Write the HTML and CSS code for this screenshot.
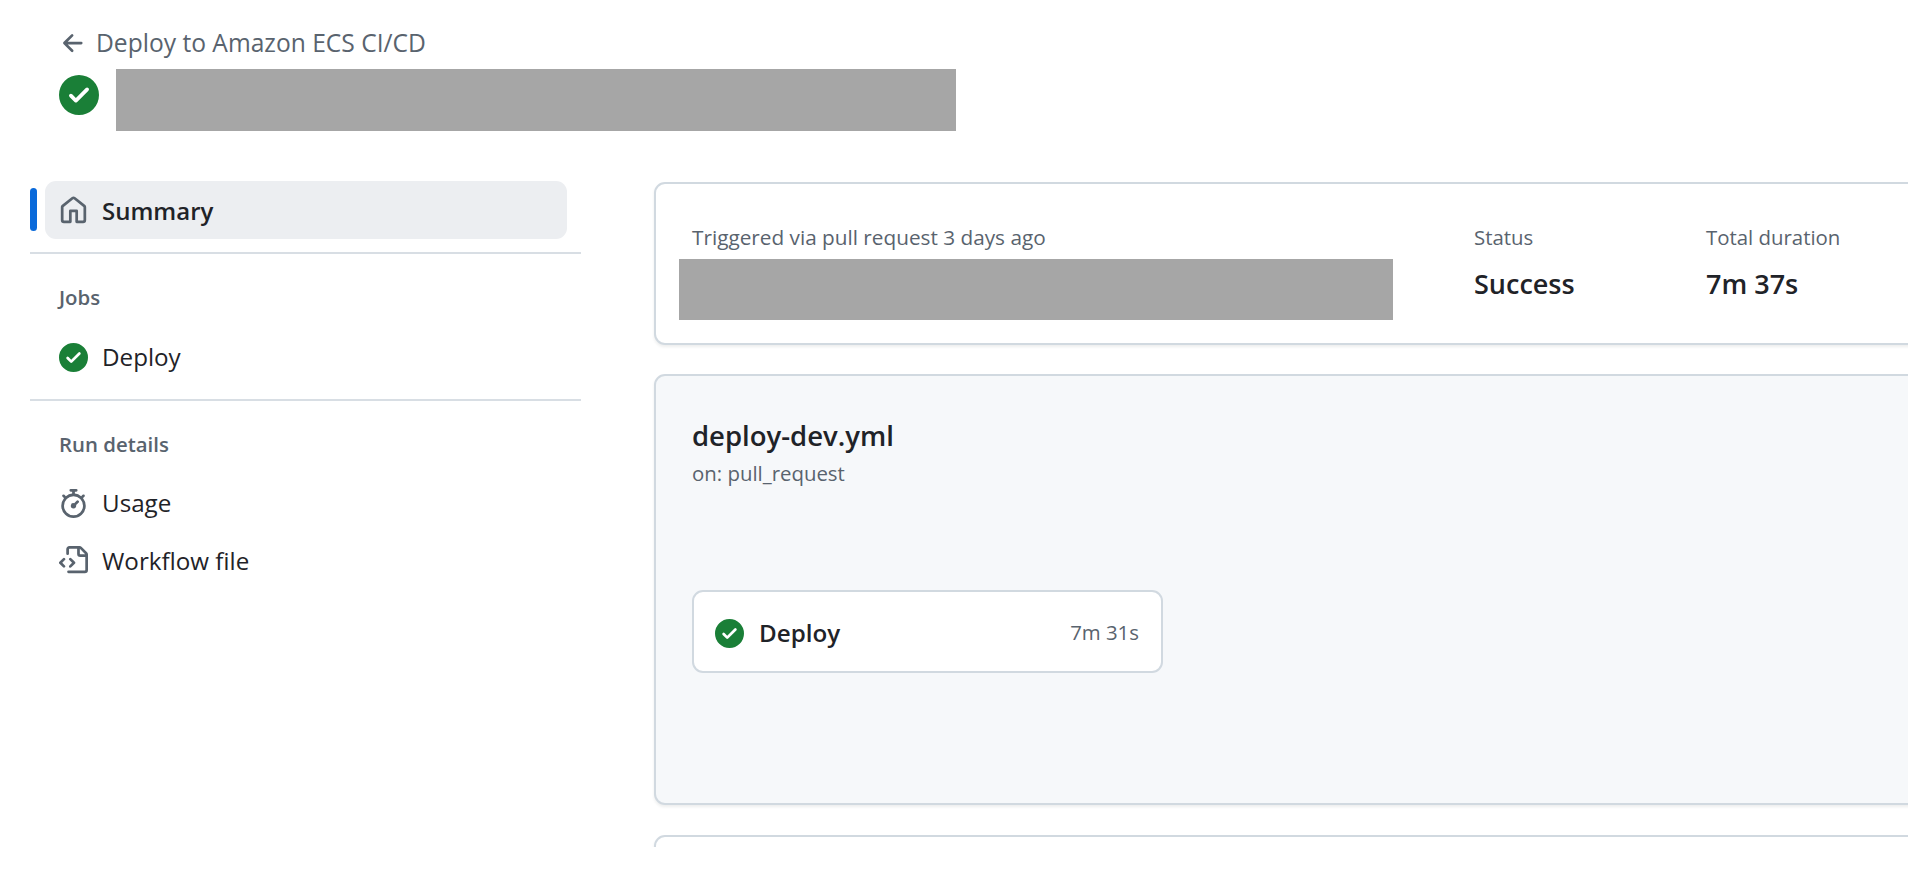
FILE: index.html
```html
<!DOCTYPE html>
<html lang="en">
<head>
<meta charset="utf-8">
<title>Deploy to Amazon ECS CI/CD</title>
<link rel="stylesheet" href="styles.css">
</head>
<body>
<svg class="defs" width="0" height="0" aria-hidden="true">
  <symbol id="i-check" viewBox="0 0 16 16"><path d="M8 16A8 8 0 1 1 8 0a8 8 0 0 1 0 16Zm3.78-9.72a.751.751 0 0 0-.018-1.042.751.751 0 0 0-1.042-.018L6.75 9.19 5.28 7.72a.751.751 0 0 0-1.042.018.751.751 0 0 0-.018 1.042l2 2a.75.75 0 0 0 1.06 0Z"/></symbol>
</svg>
<div class="page">
  <header class="head">
    <a class="back">
      <svg class="ic-back" viewBox="0 0 16 16"><path d="M7.78 12.53a.75.75 0 0 1-1.06 0L2.47 8.28a.75.75 0 0 1 0-1.06l4.25-4.25a.751.751 0 0 1 1.042.018.751.751 0 0 1 .018 1.042L4.81 7h7.44a.75.75 0 0 1 0 1.5H4.81l2.97 2.97a.75.75 0 0 1 0 1.06Z"/></svg>
      <span>Deploy to Amazon ECS CI/CD</span>
    </a>
    <div class="title-row">
      <svg class="ic-title"><use href="#i-check"/></svg>
      <div class="redact redact-title"></div>
    </div>
  </header>
  <div class="layout">
    <nav class="side">
      <a class="row row-active">
        <svg class="ic" viewBox="0 0 16 16"><path d="M6.906.664a1.749 1.749 0 0 1 2.187 0l5.25 4.2c.415.332.657.835.657 1.367v7.019A1.75 1.75 0 0 1 13.25 15h-3.5a.75.75 0 0 1-.75-.75V9H7v5.25a.75.75 0 0 1-.75.75h-3.5A1.75 1.75 0 0 1 1 13.25V6.23c0-.531.242-1.034.657-1.366l5.25-4.2Zm1.25 1.171a.25.25 0 0 0-.312 0l-5.25 4.2a.25.25 0 0 0-.094.196v7.019c0 .138.112.25.25.25H5.5V8.25a.75.75 0 0 1 .75-.75h3.5a.75.75 0 0 1 .75.75v5.25h2.75a.25.25 0 0 0 .25-.25V6.23a.25.25 0 0 0-.094-.195Z"/></svg>
        <span>Summary</span>
      </a>
      <div class="rule"></div>
      <h2 class="side-h">Jobs</h2>
      <a class="row">
        <svg class="ic ic-ok"><use href="#i-check"/></svg>
        <span>Deploy</span>
      </a>
      <div class="rule"></div>
      <h2 class="side-h side-h-b">Run details</h2>
      <a class="row">
        <svg class="ic" viewBox="0 0 16 16"><path d="M5.75.75A.75.75 0 0 1 6.5 0h3a.75.75 0 0 1 0 1.5h-.75v1l-.001.041a6.724 6.724 0 0 1 3.464 1.435l.007-.006.75-.75a.749.749 0 0 1 1.275.326.749.749 0 0 1-.215.734l-.75.75-.006.007a6.75 6.75 0 1 1-10.548 0L2.72 5.03l-.75-.75a.751.751 0 0 1 .018-1.042.751.751 0 0 1 1.042-.018l.75.75.007.006A6.72 6.72 0 0 1 7.25 2.541V1.5H6.5a.75.75 0 0 1-.75-.75ZM8 14.5a5.25 5.25 0 1 0-.001-10.501A5.25 5.25 0 0 0 8 14.5Zm.389-6.7 1.33-1.33a.75.75 0 1 1 1.061 1.06L9.45 8.861A1.503 1.503 0 0 1 8 10.75a1.499 1.499 0 1 1 .389-2.95Z"/></svg>
        <span>Usage</span>
      </a>
      <a class="row row-tight">
        <svg class="ic" viewBox="0 0 16 16"><path d="M4 1.75C4 .784 4.784 0 5.75 0h5.586c.464 0 .909.184 1.237.513l2.914 2.914c.329.328.513.773.513 1.237v8.586A1.75 1.75 0 0 1 14.25 15h-9a.75.75 0 0 1 0-1.5h9a.25.25 0 0 0 .25-.25V6h-2.75A1.75 1.75 0 0 1 10 4.25V1.5H5.75a.25.25 0 0 0-.25.25v2.5a.75.75 0 0 1-1.5 0Zm1.72 4.97a.75.75 0 0 1 1.06 0l2 2a.75.75 0 0 1 0 1.06l-2 2a.749.749 0 0 1-1.275-.326.749.749 0 0 1 .215-.734l1.47-1.47-1.47-1.47a.75.75 0 0 1 0-1.06ZM3.28 7.78 1.81 9.25l1.47 1.47a.751.751 0 0 1-.018 1.042.751.751 0 0 1-1.042.018l-2-2a.75.75 0 0 1 0-1.06l2-2a.751.751 0 0 1 1.042.018.751.751 0 0 1 .018 1.042Zm8.22-6.218V4.25c0 .138.112.25.25.25h2.688l-.011-.013-2.914-2.914-.013-.011Z"/></svg>
        <span>Workflow file</span>
      </a>
    </nav>
    <main class="main">
      <section class="card card-summary">
        <div class="trigger">
          <div class="label label-wide">Triggered via pull request 3 days ago</div>
          <div class="redact redact-actor"></div>
        </div>
        <div class="stat stat-status">
          <div class="label">Status</div>
          <div class="value">Success</div>
        </div>
        <div class="stat">
          <div class="label">Total duration</div>
          <div class="value">7m 37s</div>
        </div>
      </section>
      <section class="card card-graph">
        <h1 class="wf-name">deploy-dev.yml</h1>
        <div class="wf-on">on: pull_request</div>
        <a class="job">
          <svg class="ic ic-ok ic-job"><use href="#i-check"/></svg>
          <span class="job-name">Deploy</span>
          <span class="job-time">7m 31s</span>
        </a>
      </section>
      <section class="card card-next"></section>
    </main>
  </div>
</div>
</body>
</html>
```
FILE: styles.css
```css
* { box-sizing: border-box; }
html, body { margin: 0; padding: 0; background: #fff; overflow: hidden; }
body { font-family: "Open Sans", "Noto Sans", sans-serif; color: #1f2328; }
.defs { position: absolute; }
.page { height: 847px; overflow: hidden; width: 1908px; }

.head { padding: 26px 0 0 59px; }
.back { display: flex; align-items: center; height: 34px; gap: 8px; color: #59636e; font-size: 24.6px; line-height: 34px; }
.ic-back { width: 29px; height: 29px; fill: #59636e; flex: none; }
.title-row { display: flex; align-items: flex-start; gap: 17px; margin-top: 9px; }
.ic-title { width: 40px; height: 40px; margin-top: 6px; fill: #1a7f37; flex: none; }
.redact { background: #a6a6a6; }
.redact-title { width: 840px; height: 62px; }

.layout { display: flex; margin-top: 50px; padding-left: 30px; gap: 73px; }
.side { width: 551px; flex: none; }
.row { display: flex; align-items: center; height: 58px; padding-left: 29px; gap: 14px; font-size: 24.2px; color: #1f2328; }
.row span { padding-bottom: 2px; }
.row-tight { height: 57px; }
.row-tight span { padding-bottom: 0; }
.row-active { position: relative; margin-left: 14.5px; width: 522px; padding-left: 14.5px; background: #eceef1; border-radius: 11px; font-size: 24px; font-weight: 600; }
.row-active span { padding: 1px 0 0; }
.row-active::before { content: ""; position: absolute; left: -14.5px; top: 7px; width: 7px; height: 43px; border-radius: 4px; background: #0969da; }
.ic { width: 29px; height: 29px; fill: #59636e; flex: none; }
.ic-ok { fill: #1a7f37; }
.ic-job { margin-top: 3px; }
.rule { height: 2px; background: #d8dee4; margin-top: 13px; }
.side-h { margin: 0; padding: 28px 0 16px 29px; font-size: 20.4px; line-height: 30px; font-weight: 600; color: #59636e; }
.side-h-b { padding-bottom: 15px; }

.main { flex: none; width: 1400px; display: flex; flex-direction: column; margin-top: 1px; }
.card { border: 2px solid #d1d9e0; border-radius: 11px; box-shadow: 0 2px 3px rgba(31, 35, 40, .08); }
.card-summary { display: flex; height: 163px; padding: 38px 0 0 36px; background: #fff; }
.trigger { width: 782px; flex: none; }
.label { font-size: 20.4px; line-height: 30px; color: #59636e; }
.label-wide { font-size: 20.75px; }
.redact-actor { width: 714px; height: 61px; margin: 7px 0 0 -13px; }
.stat-status { width: 232px; flex: none; }
.value { font-size: 27px; line-height: 40px; margin-top: 12px; font-weight: 600; color: #1f2328; }
.card-graph { height: 431px; margin-top: 29px; padding: 40px 0 0 36px; background: #f6f8fa; }
.wf-name { margin: 0; font-size: 27.5px; line-height: 40px; font-weight: 600; color: #1f2328; }
.wf-on { margin-top: 2px; font-size: 20.4px; line-height: 30px; color: #59636e; }
.job { display: flex; align-items: center; width: 471px; height: 83px; margin-top: 102px; padding: 0 22px 0 21px; gap: 15px; background: #fff; border: 2px solid #d1d9e0; border-radius: 11px; }
.job-name { font-size: 24.2px; font-weight: 600; color: #1f2328; padding-top: 2px; }
.job-time { margin-left: auto; font-size: 20.4px; color: #59636e; padding-top: 1px; }
.card-next { height: 200px; margin-top: 30px; background: #fff; }
```
